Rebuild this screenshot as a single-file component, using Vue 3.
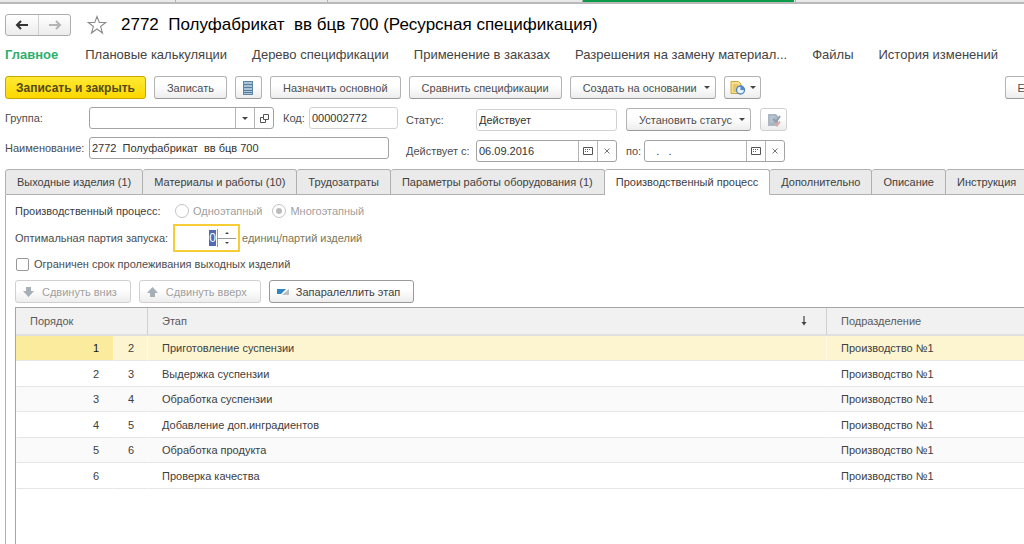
<script setup>
import { ref, onMounted } from 'vue'

const links = [
  'Плановые калькуляции',
  'Дерево спецификации',
  'Применение в заказах',
  'Разрешения на замену материал...',
  'Файлы',
  'История изменений',
]
const tabs = [
  'Выходные изделия (1)',
  'Материалы и работы (10)',
  'Трудозатраты',
  'Параметры работы оборудования (1)',
  'Производственный процесс',
  'Дополнительно',
  'Описание',
  'Инструкция',
]
const activeTab = ref(4)
const stages = [
  { order: 1, next: 2, name: 'Приготовление суспензии', dept: 'Производство №1' },
  { order: 2, next: 3, name: 'Выдержка суспензии', dept: 'Производство №1' },
  { order: 3, next: 4, name: 'Обработка суспензии', dept: 'Производство №1' },
  { order: 4, next: 5, name: 'Добавление доп.инградиентов', dept: 'Производство №1' },
  { order: 5, next: 6, name: 'Обработка продукта', dept: 'Производство №1' },
  { order: 6, next: '', name: 'Проверка качества', dept: 'Производство №1' },
]
const selected = ref(0)
const group = ref('')
const code = ref('000002772')
const title = ref('2772  Полуфабрикат  вв бцв 700')
const status = ref('Действует')
const dateFrom = ref('06.09.2016')
const dateTo = ref('   .   .')
const batch = ref('0')
const limited = ref(false)
const batchInput = ref(null)

onMounted(() => {
  batchInput.value.focus()
  batchInput.value.select()
})
</script>

<template>
  <div class="window">
    <div class="strip">
      <span class="strip-a"></span>
      <span class="strip-b"></span>
      <span class="strip-c"></span>
      <span class="strip-active"></span>
      <span class="strip-rest"></span>
    </div>

    <header class="heading">
      <div class="history">
        <button type="button" aria-label="Назад">
          <svg width="14" height="10" viewBox="0 0 14 10"><path d="M13 5H3M6 1L2 5l4 4" fill="none" stroke="#333" stroke-width="2" /></svg>
        </button>
        <button type="button" aria-label="Вперед">
          <svg width="14" height="10" viewBox="0 0 14 10"><path d="M1 5h10M8 1l4 4-4 4" fill="none" stroke="#b4b4b4" stroke-width="2" /></svg>
        </button>
      </div>
      <svg class="star" width="20" height="20" viewBox="0 0 20 20">
        <path d="M10 1.5l2.3 6h6.4l-5.1 4 1.9 6.5-5.5-4-5.5 4 1.9-6.5-5.1-4h6.4z" fill="#fff" stroke="#8c8c8c" stroke-width="1.1" />
      </svg>
      <h1>{{ title }} (Ресурсная спецификация)</h1>
    </header>

    <nav class="links">
      <a href="#" class="current">Главное</a>
      <a v-for="l in links" :key="l" href="#">{{ l }}</a>
    </nav>

    <div class="toolbar">
      <button type="button" class="btn primary">Записать и закрыть</button>
      <button type="button" class="btn">Записать</button>
      <button type="button" class="btn icon" aria-label="Список">
        <svg width="10" height="14" viewBox="0 0 10 14">
          <rect x="0.5" y="0.5" width="9" height="13" fill="#a9c4d8" stroke="#5f86a3" />
          <path d="M1 3.5h8M1 6.5h8M1 9.5h8M1 11.5h8" stroke="#5b7f9b" />
        </svg>
      </button>
      <button type="button" class="btn">Назначить основной</button>
      <button type="button" class="btn">Сравнить спецификации</button>
      <button type="button" class="btn menu">Создать на основании<i class="caret"></i></button>
      <button type="button" class="btn report" aria-label="Отчеты">
        <svg width="16" height="14" viewBox="0 0 16 14">
          <path d="M1 .5h7.500l2.500 2.500v9.500H1z" fill="#f8e08c" stroke="#cda63c" />
          <path d="M3 4h5M3 6h5M3 8h3M3 10h3" stroke="#d2ac48" />
          <circle cx="10.500" cy="9" r="4" fill="#e6f1fb" stroke="#4f7fb8" stroke-width="1.300" />
          <path d="M10.500 9V5.500A3.500 3.500 0 0 1 14 9z" fill="#4e86c6" />
        </svg>
        <i class="caret"></i>
      </button>
      <button type="button" class="btn more">Еще</button>
    </div>

    <form class="fields" @submit.prevent>
      <div class="col left">
        <div class="row">
          <label class="lab-main" for="group">Группа:</label>
          <div class="box group">
            <select id="group" v-model="group"><option value=""></option></select>
            <span class="cell"><i class="caret"></i></span>
            <button type="button" class="cell" aria-label="Открыть">
              <svg width="9" height="9" viewBox="0 0 9 9"><path d="M3.500.5h5v5h-5zM3 3.500H.5v5h5V6" fill="none" stroke="#555" /></svg>
            </button>
          </div>
          <label class="lab-code" for="code">Код:</label>
          <div class="box pale code"><input id="code" v-model="code" type="text" /></div>
        </div>
        <div class="row">
          <label class="lab-main" for="name">Наименование:</label>
          <div class="box name"><input id="name" v-model="title" type="text" /></div>
        </div>
      </div>
      <div class="col right">
        <div class="row">
          <label class="lab-status" for="status">Статус:</label>
          <div class="box pale date"><input id="status" v-model="status" type="text" /></div>
          <button type="button" class="btn menu set-status">Установить статус<i class="caret"></i></button>
          <button type="button" class="btn icon off" aria-label="Согласование" disabled>
            <svg width="14" height="14" viewBox="0 0 14 14">
              <path d="M1 1h8l2 2v10H1z" fill="#aab6c2" />
              <path d="M3 4h5M3 6h4M3 8h4" stroke="#c6d0d8" />
              <path d="M6 6l3 3 4-6" fill="none" stroke="#8e9eac" stroke-width="2" />
              <path d="M8 10l2 2.500 3-4" fill="none" stroke="#d8a8a4" stroke-width="2" />
            </svg>
          </button>
        </div>
        <div class="row">
          <label class="lab-status" for="from">Действует с:</label>
          <div class="box date">
            <input id="from" v-model="dateFrom" type="text" />
            <button type="button" class="cell" aria-label="Календарь">
              <svg width="10" height="8" viewBox="0 0 10 8"><path d="M.5.5h9v7h-9z" fill="none" stroke="#555" /><path d="M2 2.500h6M2 4.500h4" stroke="#666" stroke-dasharray="1 1" /></svg>
            </button>
            <button type="button" class="cell" aria-label="Очистить">
              <svg width="6" height="6" viewBox="0 0 6 6"><path d="M.5.5l5 5M5.500.5l-5 5" stroke="#777" /></svg>
            </button>
          </div>
          <label class="lab-to" for="to">по:</label>
          <div class="box date">
            <input id="to" v-model="dateTo" type="text" />
            <button type="button" class="cell" aria-label="Календарь">
              <svg width="10" height="8" viewBox="0 0 10 8"><path d="M.5.5h9v7h-9z" fill="none" stroke="#555" /><path d="M2 2.500h6M2 4.500h4" stroke="#666" stroke-dasharray="1 1" /></svg>
            </button>
            <button type="button" class="cell" aria-label="Очистить">
              <svg width="6" height="6" viewBox="0 0 6 6"><path d="M.5.5l5 5M5.500.5l-5 5" stroke="#777" /></svg>
            </button>
          </div>
        </div>
      </div>
    </form>

    <div class="tabs" role="tablist">
      <button
        v-for="(t, i) in tabs"
        :key="t"
        type="button"
        role="tab"
        :aria-selected="i === activeTab"
        :class="{ active: i === activeTab }"
        @click="activeTab = i"
      >{{ t }}</button>
      <span class="tabs-rest"></span>
    </div>

    <main class="panel">
      <div class="process">
        <span class="strong">Производственный процесс:</span>
        <label><input type="radio" name="process" disabled />Одноэтапный</label>
        <label><input type="radio" name="process" checked disabled />Многоэтапный</label>
      </div>
      <div class="batch">
        <label for="batch">Оптимальная партия запуска:</label>
        <div class="spin">
          <input id="batch" ref="batchInput" v-model="batch" type="text" inputmode="numeric" />
          <div class="steps">
            <button type="button" aria-label="Больше"><i class="up"></i></button>
            <button type="button" aria-label="Меньше"><i class="down"></i></button>
          </div>
        </div>
        <span class="units">единиц/партий изделий</span>
      </div>
      <label class="limit"><input v-model="limited" type="checkbox" />Ограничен срок пролеживания выходных изделий</label>
      <div class="commands">
        <button type="button" class="btn off" disabled>
          <svg width="14" height="12" viewBox="0 0 14 12"><path d="M4 1h5v4h3l-5.500 6L1 5h3z" fill="#a5afb6" /></svg>Сдвинуть вниз
        </button>
        <button type="button" class="btn off" disabled>
          <svg width="14" height="12" viewBox="0 0 14 12"><path d="M4 11h5V7h3L6.500 1 1 7h3z" fill="#a5afb6" /></svg>Сдвинуть вверх
        </button>
        <button type="button" class="btn strong-btn">
          <svg width="14" height="8" viewBox="0 0 14 8">
            <path d="M1 1h9L5 6H1z" fill="#2e86c4" />
            <path d="M13 1v6H6z" fill="#b9bdc0" />
          </svg>Запаралеллить этап
        </button>
      </div>

      <div class="grid">
        <table>
          <colgroup><col class="c-order" /><col class="c-next" /><col /><col class="c-dept" /></colgroup>
          <thead>
            <tr>
              <th colspan="2">Порядок</th>
              <th><div class="sorted">Этап<svg width="8" height="10" viewBox="0 0 8 10"><path d="M4 0v8" stroke="#444" stroke-width="1.200" /><path d="M1.500 6h5L4 9.500z" fill="#444" /></svg></div></th>
              <th>Подразделение</th>
            </tr>
          </thead>
          <tbody>
            <tr v-for="(s, i) in stages" :key="s.order" :class="{ selected: i === selected }" @click="selected = i">
              <td class="num">{{ s.order }}</td>
              <td class="next">{{ s.next }}</td>
              <td>{{ s.name }}</td>
              <td>{{ s.dept }}</td>
            </tr>
          </tbody>
        </table>
      </div>
    </main>
  </div>
</template>

<style>
body {
  margin: 0;
  background: #fff;
}
</style>

<style scoped>
* {
  box-sizing: border-box;
}
.window {
  display: flex;
  flex-direction: column;
  min-height: 100vh;
  overflow: hidden;
  font-family: "Liberation Sans", Arial, sans-serif;
  font-size: 11px;
  line-height: 16px;
  color: #4d4d4d;
  background: #fff;
}
button,
input,
select {
  font: inherit;
  color: inherit;
  margin: 0;
}
svg {
  display: block;
  flex: none;
}
.strip {
  display: flex;
  height: 4px;
  background: #e9e9e9;
  border-bottom: 2px solid #b9b9b9;
}
.strip span {
  border-right: 1px solid #b0b0b0;
}
.strip-a { width: 176px; }
.strip-b { width: 152px; }
.strip-c { width: 255px; }
.strip .strip-active {
  width: 211px;
  border: 0;
  background: #0a9c48;
}
.strip .strip-rest {
  width: 2px;
}
.heading {
  display: flex;
  align-items: center;
  height: 24px;
  margin: 9px 5px 0;
}
.history {
  display: flex;
  height: 22px;
  border: 1px solid #adadad;
  border-radius: 3px;
  background: linear-gradient(#fff, #ececec);
}
.history button {
  display: flex;
  align-items: center;
  justify-content: center;
  width: 32px;
  padding: 0;
  border: 0;
  background: none;
}
.history button + button {
  border-left: 1px solid #d0d0d0;
}
.star {
  margin: 0 14px 0 16px;
}
h1 {
  margin: 0;
  font-size: 17px;
  font-weight: normal;
  line-height: 26px;
  color: #000;
  white-space: pre;
}
.links {
  display: flex;
  gap: 25px;
  margin: 8px 5px 0;
  font-size: 13px;
  line-height: 20px;
  white-space: nowrap;
}
.links a {
  color: #444;
  text-decoration: none;
}
.links .current {
  margin-right: 2px;
  font-weight: bold;
  color: #2fae6b;
}
.btn {
  display: flex;
  align-items: center;
  justify-content: center;
  flex: none;
  height: 23px;
  padding: 0 12px;
  border: 1px solid #b4b4b4;
  border-bottom-color: #999;
  border-radius: 3px;
  background: linear-gradient(#fff 40%, #ededed);
  white-space: nowrap;
}
.primary {
  padding: 0 10px;
  border-color: #c9a500;
  background: linear-gradient(#ffe933, #fbd800);
  font-size: 12px;
  font-weight: bold;
  color: #554a1c;
}
.icon {
  width: 27px;
  padding: 0;
}
.off {
  border-color: #d0d0d0;
  color: #a0a0a0;
}
.toolbar {
  display: flex;
  gap: 8px;
  margin: 11px 0 0 5px;
}
.more {
  margin: 0 -29px 0 auto;
}
.caret {
  display: inline-block;
  border: 3px solid transparent;
  border-top-color: #444;
  border-bottom: 0;
}
.menu {
  gap: 7px;
  padding-right: 5px;
}
.report {
  gap: 4px;
  padding: 0 4px 0 5px;
}
.fields {
  display: flex;
  margin: 8px 5px 0;
}
.col {
  display: flex;
  flex-direction: column;
  gap: 8px;
}
.left {
  width: 401px;
}
.right {
  padding-top: 1px;
}
.row {
  display: flex;
  align-items: center;
  height: 22px;
  white-space: nowrap;
}
.right .row {
  height: 23px;
}
.lab-main { width: 84px; }
.lab-code { width: 26px; margin-left: 9px; }
.lab-status { width: 70px; }
.lab-to { width: 18px; margin-left: 9px; }
.box {
  display: flex;
  height: 22px;
  border: 1px solid #a3a3a3;
  border-radius: 3px;
  background: #fff;
  color: #333;
}
.pale {
  border-color: #d2d2d2;
}
.group { width: 185px; }
.code { width: 89px; }
.name { width: 300px; }
.date { width: 141px; }
.box input,
.box select {
  flex: 1;
  min-width: 0;
  padding: 0 2px;
  border: 0;
  outline: 0;
  background: none;
  appearance: none;
}
.cell {
  display: flex;
  align-items: center;
  justify-content: center;
  width: 19px;
  padding: 0;
  border: 0;
  border-left: 1px solid #b4b4b4;
  background: none;
}
.set-status {
  margin: 0 9px;
}
.tabs {
  display: flex;
  margin: 7px 0 0 5px;
}
.tabs button {
  flex: none;
  height: 26px;
  padding: 0 11px;
  border: 1px solid #b0b0b0;
  border-left-width: 0;
  border-radius: 3px 3px 0 0;
  background: #eaeaea;
  color: #404040;
  white-space: nowrap;
}
.tabs button:first-child {
  border-left-width: 1px;
}
.tabs .active {
  border-bottom-color: #fff;
  background: #fff;
}
.tabs-rest {
  flex: 1;
  border: 1px solid #b0b0b0;
  border-width: 1px 0;
  background: #eaeaea;
}
.panel {
  display: flex;
  flex-direction: column;
  flex: 1;
  margin-left: 5px;
  padding: 7px 0 0 9px;
  border-left: 1px solid #b0b0b0;
}
.process {
  display: flex;
  align-items: center;
  height: 18px;
}
.process label {
  display: flex;
  align-items: center;
  margin-left: 10px;
  color: #a0a0a0;
}
.strong {
  width: 150px;
  color: #404040;
}
.process input {
  display: grid;
  place-items: center;
  width: 14px;
  height: 14px;
  margin-right: 4px;
  border: 1px solid #c4c4c4;
  border-radius: 50%;
  background: #fff;
  appearance: none;
}
.process input:checked::before {
  content: "";
  width: 6px;
  height: 6px;
  border-radius: 50%;
  background: #bcbcbc;
}
.batch {
  display: flex;
  align-items: center;
  margin-top: 4px;
}
.batch label {
  width: 158px;
}
.spin {
  display: flex;
  width: 67px;
  height: 28px;
  padding: 3px 2px;
  border: 2px solid #f7cd35;
  background: #fff;
}
.spin input {
  flex: 1;
  min-width: 0;
  padding: 0 1px;
  border: 0;
  outline: 0;
  font-size: 12px;
  text-align: right;
}
.spin input::selection {
  background: #5468b8;
  color: #fff;
}
.steps {
  display: flex;
  flex-direction: column;
  width: 19px;
  border-left: 1px solid #999;
}
.steps button {
  display: flex;
  flex: 1;
  align-items: center;
  justify-content: center;
  padding: 0;
  border: 0;
  background: none;
}
.steps button + button {
  border-top: 1px solid #999;
}
.up,
.down {
  border: 2px solid transparent;
}
.up {
  border-bottom-color: #444;
  border-top: 0;
}
.down {
  border-top-color: #444;
  border-bottom: 0;
}
.units {
  margin-left: 2px;
  color: #7d7755;
}
.limit {
  display: flex;
  align-items: center;
  align-self: flex-start;
  height: 16px;
  margin-top: 4px;
}
.limit input {
  width: 13px;
  height: 13px;
  margin: 0 5px 0 1px;
  border: 1px solid #999;
  border-radius: 2px;
  background: #fff;
  appearance: none;
}
.commands {
  display: flex;
  gap: 8px;
  margin-top: 8px;
}
.commands .btn {
  gap: 6px;
  padding: 0 13px 0 6px;
}
.commands .strong-btn {
  border-color: #999;
  color: #404040;
}
.grid {
  flex: 1;
  margin-top: 4px;
  border: 1px solid #a6a6a6;
  border-width: 1px 0 0 1px;
}
table {
  width: 100%;
  table-layout: fixed;
  border-collapse: separate;
  border-spacing: 0;
}
.c-order { width: 97px; }
.c-next { width: 34px; }
.c-dept { width: 198px; }
th {
  height: 28px;
  padding: 0 14px;
  border-left: 1px solid #d0d0d0;
  border-bottom: 2px solid #e0e0e0;
  background: #f1f1f1;
  font-weight: normal;
  text-align: left;
  color: #5a5a5a;
}
th:first-child {
  border-left: 0;
}
.sorted {
  display: flex;
  align-items: center;
  justify-content: space-between;
}
.sorted svg {
  margin-right: 4px;
}
td {
  height: 26px;
  padding: 0 14px;
  border-left: 1px solid transparent;
  border-bottom: 1px solid #e6e6e6;
  color: #404040;
}
tr:nth-child(odd) td {
  height: 25px;
  background: #fafafa;
}
.num,
.next {
  text-align: right;
}
tbody .selected td {
  background: #fdf5d0;
  border-left-color: #fffbe8;
}
tbody .selected .num {
  border-left-color: #fbeb9c;
  background: #fbeb9c;
  color: #111;
}
</style>
